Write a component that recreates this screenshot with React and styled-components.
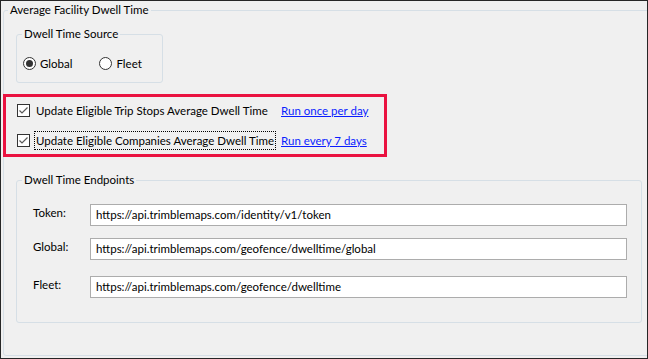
import React from 'react';
import styled, {createGlobalStyle} from 'styled-components';

const GlobalStyle = createGlobalStyle`
  body {
    margin: 0;
    background: #ffffff;
    font-family: Lato, "Liberation Sans", sans-serif;
    font-size: 11.5px;
    color: #000000;
  }
`;

const Frame = styled.div`
  box-sizing: border-box;
  width: 648px;
  height: 359px;
  border: 1px solid #262626;
  background: #f0f0f0;
  overflow: hidden;
  display: flex;
  flex-direction: column;
`;

const GroupBox = styled.fieldset`
  box-sizing: border-box;
  margin: ${p => p.$margin || '0'};
  padding: 0;
  min-inline-size: 0;
  border: 1px solid #d6dfe6;
  border-radius: 3px;
  width: ${p => p.$width ? p.$width + 'px' : 'auto'};
  flex: ${p => p.$grow ? '1' : 'none'};
`;

const Legend = styled.legend`
  margin-left: ${p => p.$indent}px;
  padding: 0 2px;
  line-height: 14px;
  height: 14px;
`;

const GroupBody = styled.div`
  padding: ${p => p.$pad};
`;

const RadioRow = styled.div`
  display: flex;
  align-items: center;
  height: 14px;
`;

const RadioOption = styled.label`
  display: flex;
  align-items: center;
  gap: 4px;
  margin-right: ${p => p.$space || 0}px;
`;

const RadioCircle = styled.span`
  box-sizing: border-box;
  width: 13px;
  height: 13px;
  border: 1px solid #333333;
  border-radius: 50%;
  background: #ffffff;
  display: flex;
  align-items: center;
  justify-content: center;

  &::after {
    content: '';
    width: 7px;
    height: 7px;
    border-radius: 50%;
    background: ${p => p.$on ? '#333333' : 'transparent'};
  }
`;

const Highlight = styled.div`
  box-sizing: border-box;
  width: 384px;
  height: 63px;
  margin: 11px 0 0 -13px;
  border: 3px solid #ea1240;
  padding: 3px 0 0 11px;
  display: flex;
  flex-direction: column;
  gap: 10px;
`;

const CheckRow = styled.div`
  display: grid;
  grid-template-columns: 13px 243px auto;
  align-items: center;
  column-gap: 4px;
  height: 20px;
`;

const CheckBox = styled.span`
  box-sizing: border-box;
  width: 13px;
  height: 13px;
  border: 1px solid #333333;
  background: #ffffff;
  display: flex;
  align-items: center;
  justify-content: center;
`;

const CheckLabel = styled.span`
  justify-self: start;
  padding: 1px 1px;
  border: 1px ${p => p.$focused ? 'dotted #000000' : 'solid transparent'};
  line-height: 15px;
  white-space: nowrap;
`;

const Link = styled.a`
  color: #0a1dff;
  text-decoration: underline;
  white-space: nowrap;
  cursor: pointer;
`;

const FieldRows = styled.div`
  display: flex;
  flex-direction: column;
`;

const FieldRow = styled.div`
  display: grid;
  grid-template-columns: 57px 537px;
  align-items: start;
  margin-top: ${p => p.$gap || 0}px;
`;

const FieldLabel = styled.span`
  padding-top: 1px;
  line-height: 15px;
`;

const TextBox = styled.div`
  box-sizing: border-box;
  height: 22px;
  border: 1px solid #acacac;
  background: #ffffff;
  padding: 0 5px;
  line-height: 20px;
  white-space: nowrap;
  overflow: hidden;
`;

const Check = () => (
    <svg width="11" height="11" viewBox="0 0 11 11">
        <polyline points="1.5,5.5 4,8 9.5,2.5" fill="none" stroke="#5a5a5a" strokeWidth="1.2"/>
    </svg>
);

const endpoints = [
    {label: 'Token:', url: 'https://api.trimblemaps.com/identity/v1/token', gap: 0},
    {label: 'Global:', url: 'https://api.trimblemaps.com/geofence/dwelltime/global', gap: 12},
    {label: 'Fleet:', url: 'https://api.trimblemaps.com/geofence/dwelltime', gap: 16},
];

export default function App() {
    return (
        <Frame>
            <GlobalStyle/>
            <GroupBox $margin="2px -20px 2px 2px" $grow>
                <Legend $indent={4}>Average Facility Dwell Time</Legend>
                <GroupBody $pad="10px 0 0 12px">
                    <GroupBox $width={147}>
                        <Legend $indent={5}>Dwell Time Source</Legend>
                        <GroupBody $pad="15px 0 12px 6px">
                            <RadioRow>
                                <RadioOption $space={27}>
                                    <RadioCircle $on/>
                                    Global
                                </RadioOption>
                                <RadioOption>
                                    <RadioCircle/>
                                    Fleet
                                </RadioOption>
                            </RadioRow>
                        </GroupBody>
                    </GroupBox>

                    <Highlight>
                        <CheckRow>
                            <CheckBox><Check/></CheckBox>
                            <CheckLabel>Update Eligible Trip Stops Average Dwell Time</CheckLabel>
                            <Link>Run once per day</Link>
                        </CheckRow>
                        <CheckRow>
                            <CheckBox><Check/></CheckBox>
                            <CheckLabel $focused>Update Eligible Companies Average Dwell Time</CheckLabel>
                            <Link>Run every 7 days</Link>
                        </CheckRow>
                    </Highlight>

                    <GroupBox $width={626} $margin="16px 0 0 0">
                        <Legend $indent={5}>Dwell Time Endpoints</Legend>
                        <GroupBody $pad="17px 0 24px 16px">
                            <FieldRows>
                                {endpoints.map(e => (
                                    <FieldRow key={e.label} $gap={e.gap}>
                                        <FieldLabel>{e.label}</FieldLabel>
                                        <TextBox>{e.url}</TextBox>
                                    </FieldRow>
                                ))}
                            </FieldRows>
                        </GroupBody>
                    </GroupBox>
                </GroupBody>
            </GroupBox>
        </Frame>
    );
}
